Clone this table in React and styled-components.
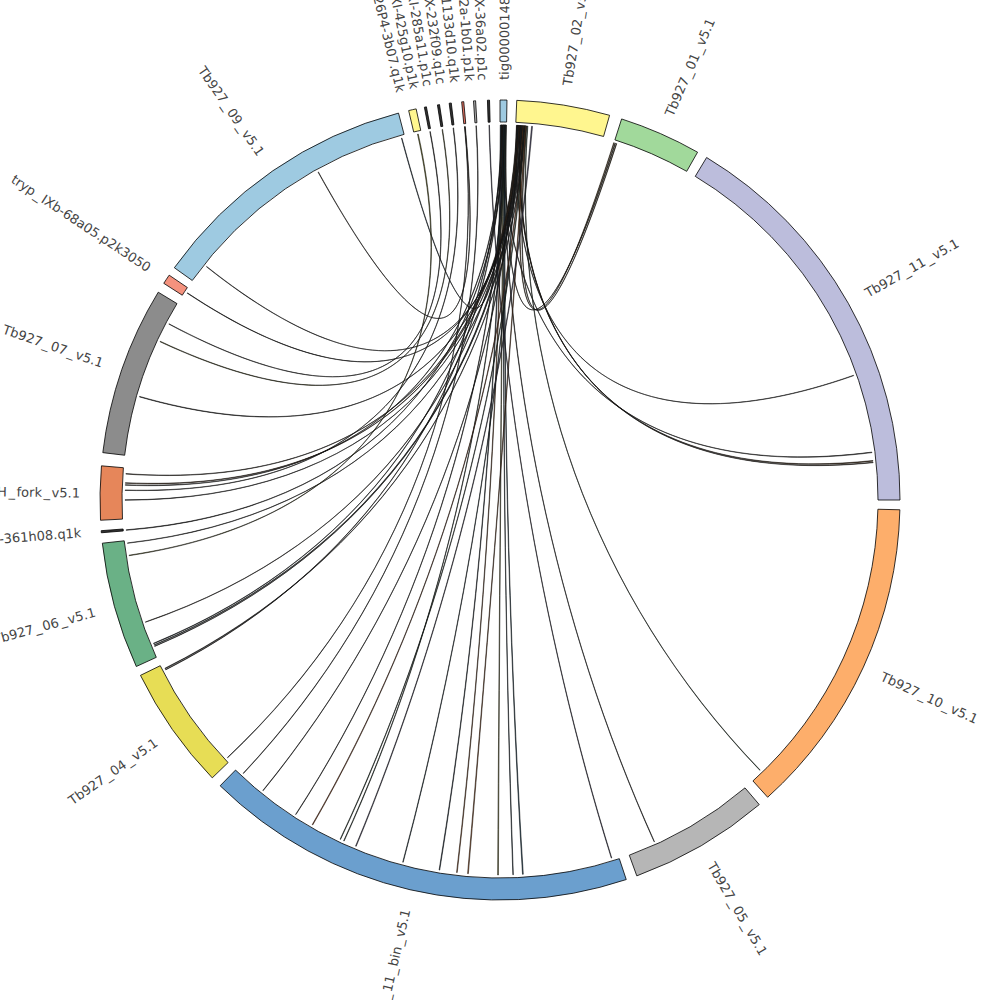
import React from 'react';
import styled, { createGlobalStyle } from 'styled-components';

const GlobalStyle = createGlobalStyle`
  html, body {
    margin: 0;
    padding: 0;
    background: #fff;
  }
`;

const Frame = styled.div`
  width: 1000px;
  height: 1000px;
  overflow: hidden;
  background: #fff;
`;

const Chart = styled.svg`
  display: block;
  width: 1000px;
  height: 1000px;
`;

const Block = styled.path`
  fill: ${p => p.$fill};
  stroke: #000;
  stroke-width: 0.8;
`;

const Ribbon = styled.path`
  fill: ${p => p.$tint};
  stroke: #111;
  stroke-width: 0.55;
`;

const Label = styled.text`
  font-family: "DejaVu Sans", sans-serif;
  font-size: 13px;
  fill: #444;
  dominant-baseline: central;
`;

// geometry
const CX = 500;
const CY = 500;
const R_OUT = 400;
const R_IN = 378;
const R_LINK = 375;
const R_LABEL = 420;
const BEND = 0.36;
const UNDERSCORE_GAP = 1.6;

const rad = d => (d * Math.PI) / 180;
const pt = (a, r) => [CX + r * Math.sin(rad(a)), CY - r * Math.cos(rad(a))];
const f = ([x, y]) => `${x.toFixed(2)} ${y.toFixed(2)}`;

const blockPath = (a1, a2) => {
  const large = a2 - a1 > 180 ? 1 : 0;
  return `M${f(pt(a1, R_OUT))} A${R_OUT} ${R_OUT} 0 ${large} 1 ${f(pt(a2, R_OUT))} ` +
    `L${f(pt(a2, R_IN))} A${R_IN} ${R_IN} 0 ${large} 0 ${f(pt(a1, R_IN))} Z`;
};

const ribbonPath = (a, b, wa, wb) => {
  const a1 = a - wa / 2, a2 = a + wa / 2;
  const b1 = b - wb / 2, b2 = b + wb / 2;
  const rc = R_LINK * BEND;
  return `M${f(pt(a1, R_LINK))} A${R_LINK} ${R_LINK} 0 0 1 ${f(pt(a2, R_LINK))} ` +
    `C${f(pt(a2, rc))} ${f(pt(b1, rc))} ${f(pt(b1, R_LINK))} ` +
    `A${R_LINK} ${R_LINK} 0 0 1 ${f(pt(b2, R_LINK))} ` +
    `C${f(pt(b2, rc))} ${f(pt(a1, rc))} ${f(pt(a1, R_LINK))} Z`;
};

const contigs = [
  { name: 'tig00000148', a1: 0.0, a2: 1.0, fill: '#9ecae1' },
  { name: 'Tb927_02_v5.1', a1: 2.4, a2: 15.9, fill: '#fff68f' },
  { name: 'Tb927_01_v5.1', a1: 17.7, a2: 29.6, fill: '#a1d99b' },
  { name: 'Tb927_11_v5.1', a1: 31.1, a2: 90.0, fill: '#bcbddc' },
  { name: 'Tb927_10_v5.1', a1: 91.4, a2: 138.0, fill: '#fdae6b' },
  { name: 'Tb927_05_v5.1', a1: 139.6, a2: 160.0, fill: '#b6b6b6' },
  { name: 'Tb927_11_bin_v5.1', a1: 161.6, a2: 224.4, fill: '#6b9fce' },
  { name: 'Tb927_04_v5.1', a1: 226.0, a2: 244.0, fill: '#e7dd55' },
  { name: 'Tb927_06_v5.1', a1: 245.4, a2: 263.8, fill: '#6ab186' },
  { name: 'tryp_XI-361h08.q1k', a1: 265.3, a2: 265.6, fill: '#333', label: 265.6 },
  { name: 'Tb927_BES_H_fork_v5.1', a1: 267.1, a2: 274.9, fill: '#e6865a' },
  { name: 'Tb927_07_v5.1', a1: 276.8, a2: 301.3, fill: '#8c8c8c' },
  { name: 'tryp_IXb-68a05.p2k3050', a1: 302.8, a2: 304.2, fill: '#f4927e' },
  { name: 'Tb927_09_v5.1', a1: 305.5, a2: 345.3, fill: '#9ecae1' },
  { name: 'tryp_X-126P4-3b07.q1k', a1: 346.8, a2: 347.9, fill: '#fff68f', label: 346.4 },
  { name: 'tryp_XI-425g10.p1k', a1: 349.1, a2: 349.4, fill: '#333', label: 348.3 },
  { name: 'tryp_XI-285a11.p1c', a1: 351.0, a2: 351.3, fill: '#333', label: 350.2 },
  { name: 'tryp_X-232f09.q1c', a1: 352.7, a2: 353.0, fill: '#333', label: 352.0 },
  { name: 'tryp_XI-1133d10.q1k', a1: 354.5, a2: 354.8, fill: '#e07060', label: 353.9 },
  { name: 'tryp_X-112a-1b01.p1k', a1: 356.2, a2: 356.5, fill: '#aaa', label: 355.9 },
  { name: 'tryp_X-36a02.p1c', a1: 358.2, a2: 358.5, fill: '#333', label: 357.7 },
];

// [top end, other end, tint, top width, other width]
const links = [
  // tig00000148 bundle
  [0.12, 189.3, '#24384a', 0.16, 0.1],
  [0.22, 247.5, '#2e3b44', 0.12, 0.08],
  [0.3, 272.3, '#2b2b2b', 0.12, 0.08],
  [0.38, 186.6, '#b0602a', 0.14, 0.1],
  [0.46, 243.1, '#3a3530', 0.12, 0.08],
  [0.52, 155.7, '#2b2b2b', 0.1, 0.06],
  [0.58, 180.3, '#8b8a3e', 0.14, 0.12],
  [0.64, 265.4, '#222', 0.1, 0.08],
  [0.7, 213.0, '#2b2b2b', 0.12, 0.06],
  [0.76, 178.0, '#1f3f55', 0.12, 0.08],
  [0.82, 204.6, '#2f4a3a', 0.12, 0.08],
  [0.88, 176.5, '#1d4a63', 0.14, 0.12],
  [0.25, 82.7, '#2b2b2b', 0.08, 0.08],
  [0.92, 17.9, '#3a2f1f', 0.08, 0.08],
  [0.5, 344.8, '#2a4a66', 0.08, 0.08],
  // Tb927_02 start bundle
  [2.55, 70.6, '#2b2b2b', 0.08, 0.06],
  [2.62, 251.0, '#3a2b1f', 0.12, 0.06],
  [2.68, 219.2, '#2b2b2b', 0.08, 0.06],
  [2.74, 274.0, '#4a3a2a', 0.12, 0.08],
  [2.8, 195.0, '#1f4050', 0.12, 0.08],
  [2.86, 308.5, '#2b2b2b', 0.08, 0.06],
  [2.94, 272.6, '#5a3a1f', 0.14, 0.1],
  [3.02, 303.5, '#2b2b2b', 0.08, 0.06],
  [3.08, 84.0, '#5a3a1a', 0.12, 0.1],
  [3.14, 84.25, '#3a2a1a', 0.08, 0.08],
  [3.22, 286.0, '#2b2b2b', 0.1, 0.08],
  [3.3, 247.25, '#3a4a4a', 0.12, 0.08],
  [3.38, 270.0, '#2b2b2b', 0.08, 0.06],
  [3.46, 247.05, '#2b2b2b', 0.08, 0.06],
  [3.54, 17.7, '#6b4a1a', 0.14, 0.1],
  [3.62, 210.0, '#b0582a', 0.12, 0.1],
  [3.7, 263.4, '#2b2b2b', 0.08, 0.06],
  [3.78, 205.2, '#2f4f3a', 0.12, 0.08],
  [3.86, 243.3, '#2b2b2b', 0.1, 0.08],
  [3.94, 184.9, '#b0602a', 0.12, 0.12],
  [4.04, 18.1, '#4a3a1a', 0.1, 0.08],
  [4.9, 202.6, '#5a5578', 0.14, 0.1],
  [4.22, 136.1, '#2f5a3a', 0.08, 0.06],
  // small contigs
  [347.35, 261.5, '#7a7a2a', 0.12, 0.08],
  [349.25, 298.0, '#2b2b2b', 0.08, 0.06],
  [351.15, 295.0, '#6a6a2a', 0.08, 0.08],
  [352.85, 271.5, '#2b2b2b', 0.08, 0.06],
  [354.65, 331.0, '#3a2a1a', 0.08, 0.06],
  [354.6, 226.6, '#2b2b2b', 0.06, 0.06],
  [356.35, 223.2, '#2b2b2b', 0.08, 0.06],
  [358.35, 162.7, '#4a4570', 0.08, 0.08],
];

const labelProps = mid => {
  const [x, y] = pt(mid, R_LABEL);
  const m = ((mid % 360) + 360) % 360;
  if (m < 180) return { x, y, rot: m - 90, anchor: 'start' };
  return { x, y, rot: m - 270, anchor: 'end' };
};

// underscores in the original render with a little air around them
const nameParts = name =>
  name.split('_').map((part, i) =>
    i === 0 ? (
      <tspan key={i}>{part}</tspan>
    ) : (
      <React.Fragment key={i}>
        <tspan dx={UNDERSCORE_GAP}>_</tspan>
        <tspan dx={UNDERSCORE_GAP}>{part}</tspan>
      </React.Fragment>
    )
  );

const ContigLabel = ({ name, angle }) => {
  const { x, y, rot, anchor } = labelProps(angle);
  return (
    <Label
      textAnchor={anchor}
      transform={`translate(${x.toFixed(2)} ${y.toFixed(2)}) rotate(${rot.toFixed(2)})`}
    >
      {nameParts(name)}
    </Label>
  );
};

const App = () => (
  <Frame>
    <GlobalStyle />
    <Chart viewBox="0 0 1000 1000">
      <g>
        {links.map(([a, b, tint, wa, wb], i) => (
          <Ribbon key={i} d={ribbonPath(a, b, wa, wb)} $tint={tint} />
        ))}
      </g>
      <g>
        {contigs.map(c => (
          <Block key={c.name} d={blockPath(c.a1, c.a2)} $fill={c.fill} />
        ))}
      </g>
      <g>
        {contigs.map(c => (
          <ContigLabel
            key={c.name}
            name={c.name}
            angle={c.label !== undefined ? c.label : (c.a1 + c.a2) / 2}
          />
        ))}
      </g>
    </Chart>
  </Frame>
);

export default App;
